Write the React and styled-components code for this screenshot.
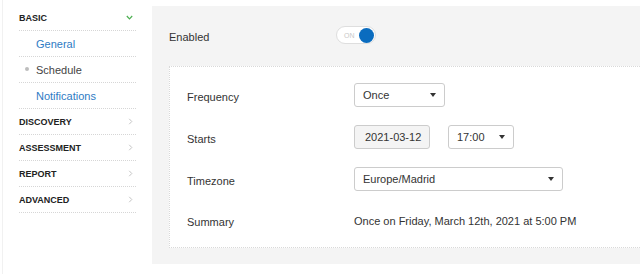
import React from "react";
import styled, { createGlobalStyle } from "styled-components";

const GlobalStyle = createGlobalStyle`
  html, body { margin: 0; padding: 0; background: #fff; }
  body { font-family: "Liberation Sans", Arial, sans-serif; color: #333; }
  * { box-sizing: border-box; }
`;

const Layout = styled.div`
  display: flex;
  height: 274px;
  padding-left: 2px;
  overflow: hidden;
`;

const Sidebar = styled.nav`
  width: 150px;
  flex: none;
  border-left: 1px solid #f1f1f1;
  padding: 5px 16px 0 16px;
  display: flex;
  flex-direction: column;
`;

const NavRow = styled.div`
  height: 26px;
  flex: none;
  border-bottom: 1px dotted #d6d6d6;
  display: flex;
  align-items: center;
  justify-content: space-between;
  padding-left: ${(p) => (p.$sub ? (p.$active ? "6px" : "17px") : "0")};
  padding-right: 3px;
`;

const Header = styled.span`
  font-size: 9px;
  font-weight: bold;
  text-transform: uppercase;
  color: #222;
`;

const SubLink = styled.span`
  font-size: 11px;
  color: ${(p) => (p.$active ? "#444" : "#2e7bc4")};
  display: flex;
  align-items: center;
`;

const Dot = styled.span`
  width: 4px;
  height: 4px;
  border-radius: 50%;
  background: #bdbdbd;
  margin-right: 7px;
  margin-top: -2px;
`;

const Main = styled.main`
  flex: 1;
  margin: 6px 0 10px 0;
  background: #f4f4f4;
  padding: 20px 0 17px 17px;
  display: flex;
  flex-direction: column;
`;

const EnabledRow = styled.div`
  display: flex;
  align-items: center;
  height: 18px;
  margin-bottom: 22px;
`;

const Label = styled.span`
  font-size: 11px;
  color: #333;
  width: ${(p) => p.$w || "auto"};
  flex: none;
  padding-top: ${(p) => p.$drop || "0"};
`;

const Toggle = styled.div`
  width: 40px;
  height: 18px;
  border: 1px solid #dedede;
  border-radius: 9px;
  background: #fff;
  display: flex;
  align-items: center;
  justify-content: space-between;
  padding: 0 1px 0 7px;
`;

const ToggleText = styled.span`
  font-size: 7px;
  color: #c8c8c8;
`;

const Knob = styled.span`
  width: 15px;
  height: 15px;
  border-radius: 50%;
  background: #0a6cbf;
`;

const Card = styled.section`
  background: #fff;
  border: 1px dotted #d9d9d9;
  border-right: none;
  padding: 16px 18px 14px 17px;
  display: grid;
  grid-template-columns: 167px 1fr;
  row-gap: 18px;
  align-items: center;
`;

const Controls = styled.div`
  display: flex;
  align-items: center;
  gap: 18px;
  height: 24px;
`;

const Select = styled.div`
  width: ${(p) => p.$w};
  height: 24px;
  border: 1px solid #ccc;
  border-radius: 3px;
  background: #fff;
  display: flex;
  align-items: center;
  justify-content: space-between;
  padding: 0 8px 0 8px;
  font-size: 11px;
  color: #333;
`;

const Caret = styled.span`
  width: 0;
  height: 0;
  border-left: 3.5px solid transparent;
  border-right: 3.5px solid transparent;
  border-top: 4px solid #333;
`;

const DateInput = styled.div`
  width: 76px;
  height: 24px;
  border: 1px solid #ccc;
  border-radius: 3px;
  background: #f4f4f4;
  display: flex;
  align-items: center;
  padding-left: 10px;
  font-size: 11px;
  color: #333;
`;

const SummaryText = styled.span`
  font-size: 11px;
  color: #333;
`;

const ChevronDown = () => (
  <svg width="7" height="5" viewBox="0 0 7 5">
    <polyline points="0.8,1 3.5,3.8 6.2,1" fill="none" stroke="#4caf50" strokeWidth="1.2" />
  </svg>
);

const ChevronRight = () => (
  <svg width="5" height="7" viewBox="0 0 5 7">
    <polyline points="1.2,0.8 3.8,3.5 1.2,6.2" fill="none" stroke="#c4c4c4" strokeWidth="1" />
  </svg>
);

const sections = ["Discovery", "Assessment", "Report", "Advanced"];

export default function App() {
  return (
    <>
      <GlobalStyle />
      <Layout>
        <Sidebar>
          <NavRow>
            <Header>Basic</Header>
            <ChevronDown />
          </NavRow>
          <NavRow $sub>
            <SubLink>General</SubLink>
          </NavRow>
          <NavRow $sub $active>
            <SubLink $active>
              <Dot />
              Schedule
            </SubLink>
          </NavRow>
          <NavRow $sub>
            <SubLink>Notifications</SubLink>
          </NavRow>
          {sections.map((s) => (
            <NavRow key={s}>
              <Header>{s}</Header>
              <ChevronRight />
            </NavRow>
          ))}
        </Sidebar>
        <Main>
          <EnabledRow>
            <Label $w="167px" $drop="3px">Enabled</Label>
            <Toggle>
              <ToggleText>ON</ToggleText>
              <Knob />
            </Toggle>
          </EnabledRow>
          <Card>
            <Label $drop="3px">Frequency</Label>
            <Controls>
              <Select $w="91px">
                Once
                <Caret />
              </Select>
            </Controls>
            <Label $drop="3px">Starts</Label>
            <Controls>
              <DateInput>2021-03-12</DateInput>
              <Select $w="66px">
                17:00
                <Caret />
              </Select>
            </Controls>
            <Label $drop="3px">Timezone</Label>
            <Controls>
              <Select $w="209px">
                Europe/Madrid
                <Caret />
              </Select>
            </Controls>
            <Label $drop="2px">Summary</Label>
            <Controls>
              <SummaryText>Once on Friday, March 12th, 2021 at 5:00 PM</SummaryText>
            </Controls>
          </Card>
        </Main>
      </Layout>
    </>
  );
}
